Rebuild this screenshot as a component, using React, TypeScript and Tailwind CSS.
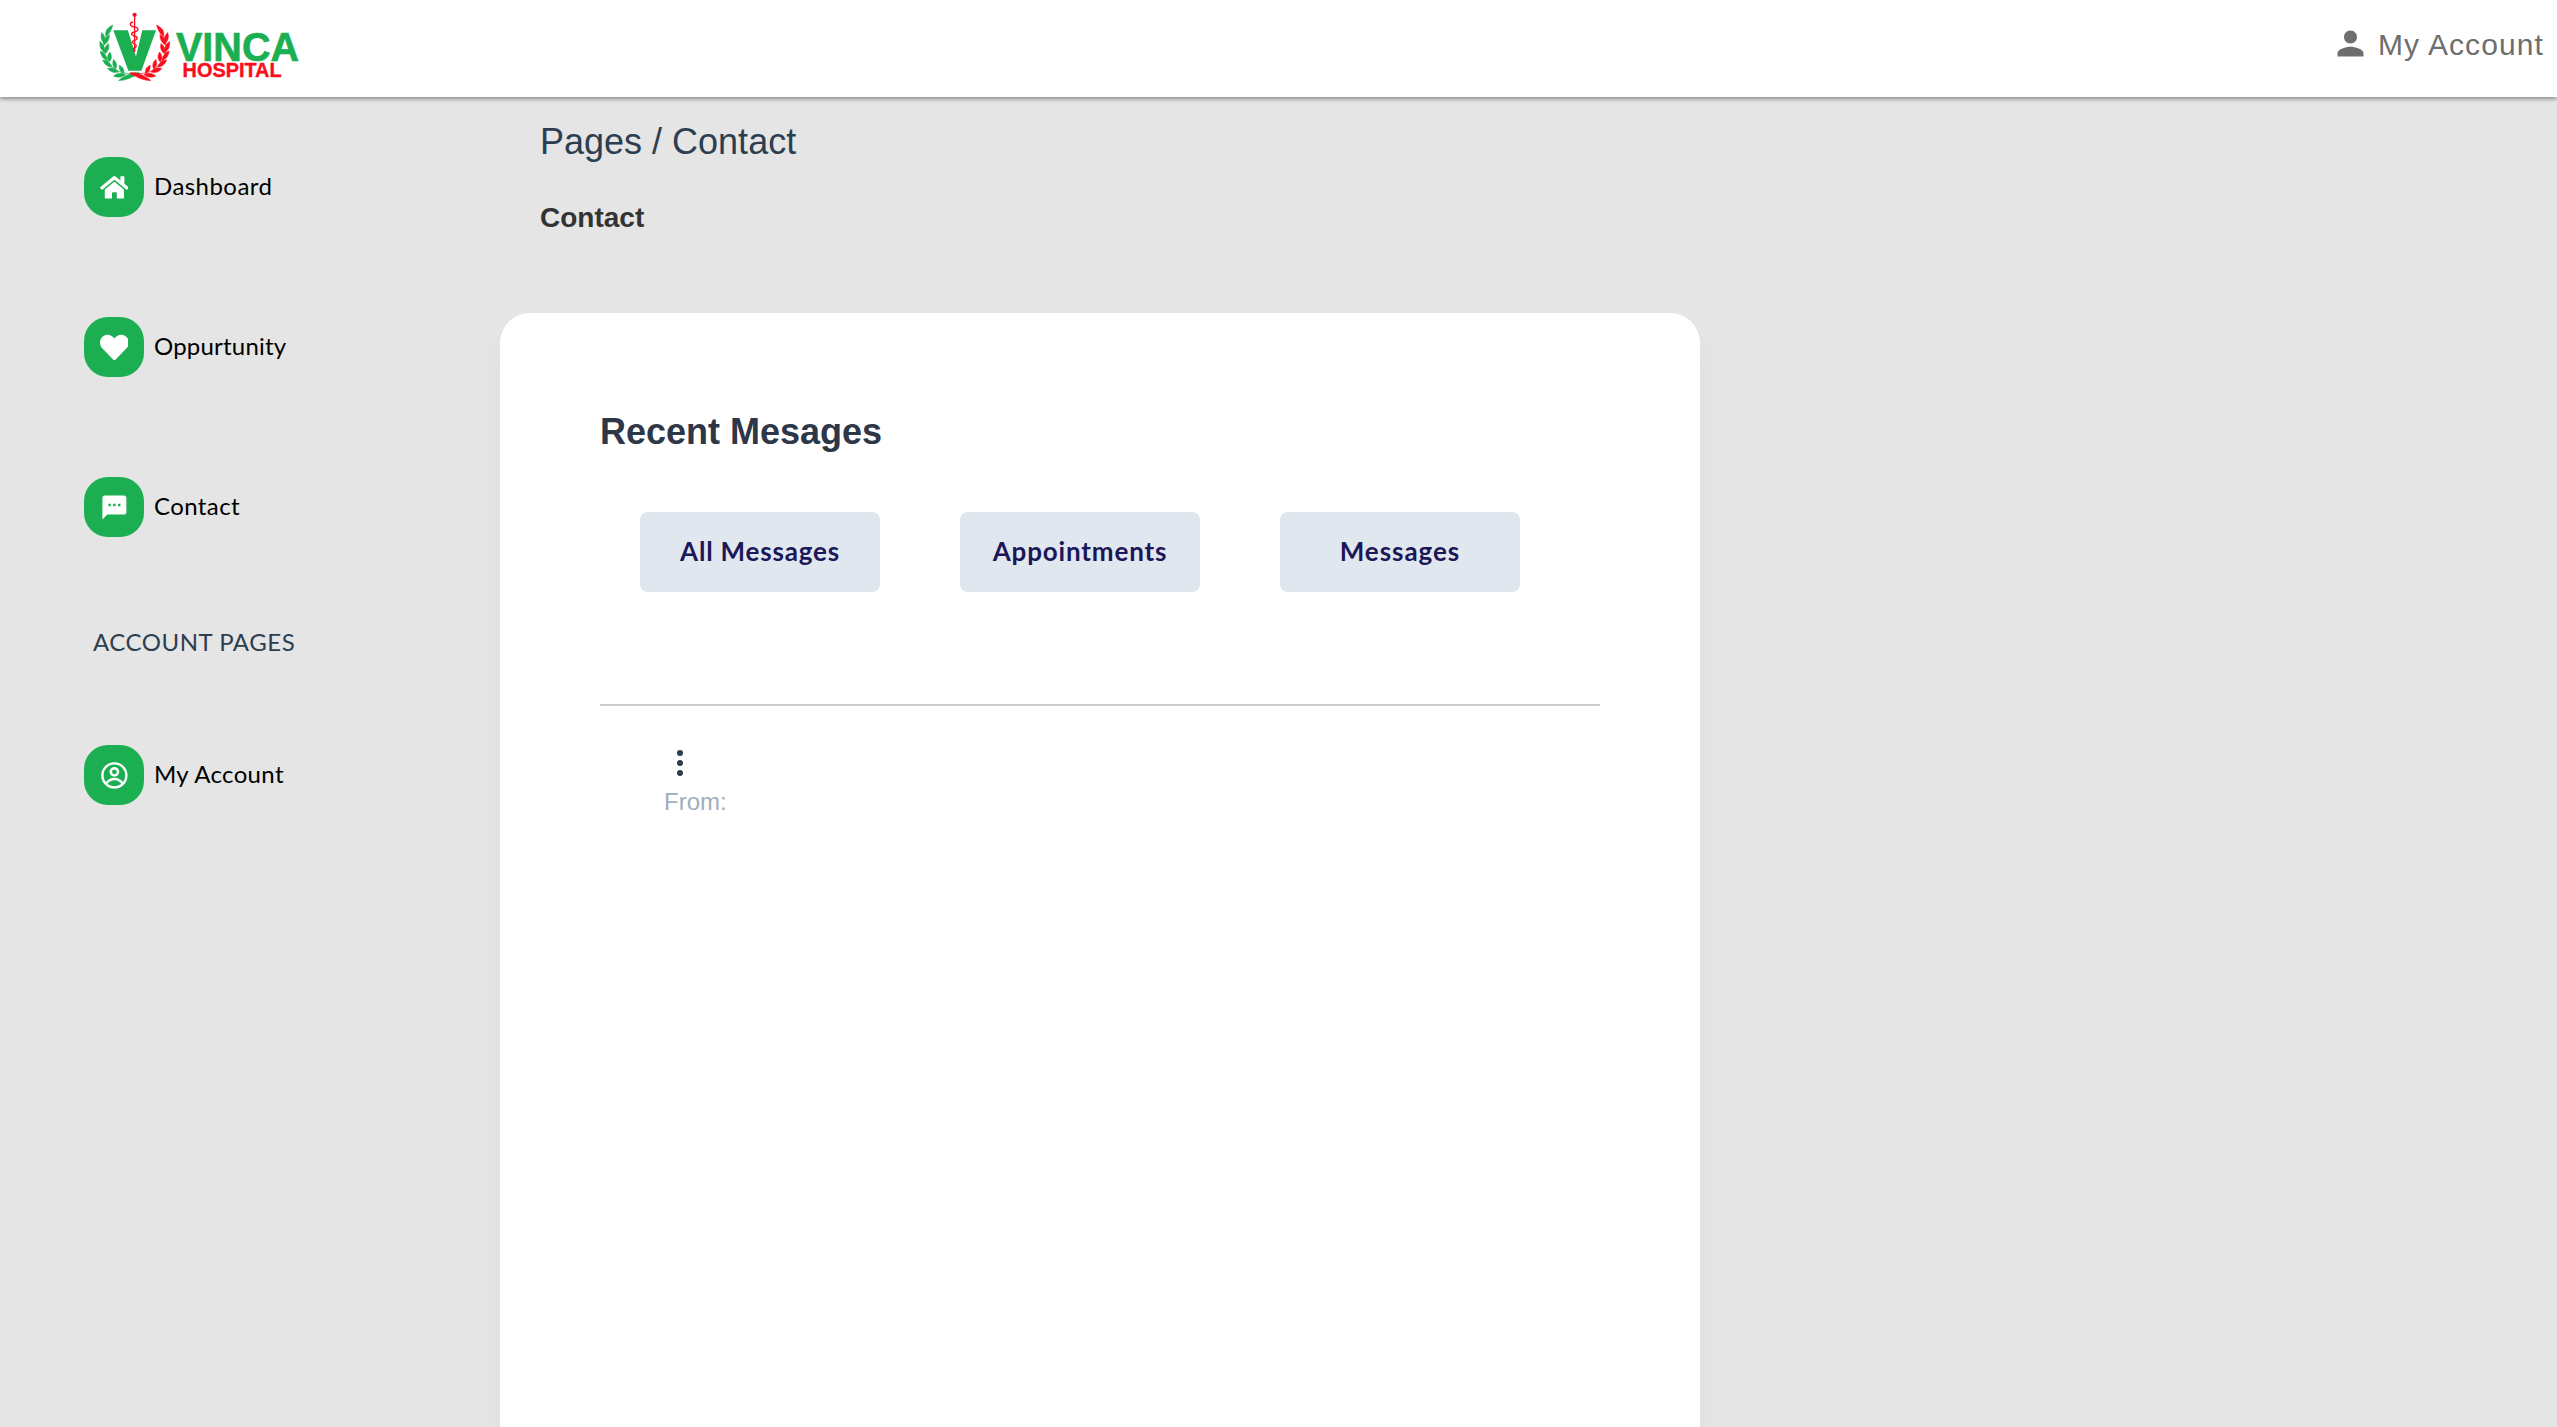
import React from "react";
import { FaHome, FaHeart } from "react-icons/fa";
import { MdSms, MdPerson } from "react-icons/md";
import { CgProfile } from "react-icons/cg";

function Laurel({ color }: { color: string }) {
  return (
    <g fill={color} stroke={color} strokeWidth="0.5">
      <path d="M111.5 27 C101 38 100 55 111 66 C118 73 127 74.5 136 73" fill="none" strokeWidth="0.7" />
      <path d="M139 72.5 C131 73 124 75.5 118.5 80.5 C126 81 133 76.5 139 74Z" />
      <path d="M112.8 25 C106.5 28 104.5 32 106.3 36.5 C110 33 111.6 29.5 112.8 25Z" />
      <path d="M101.7 32.5 C100.4 37 101 40.5 104.4 43.5 C105.6 39 104.8 35.5 101.7 32.5Z" />
      <path d="M109.5 34.5 C105 37.5 103 40.5 104.2 45 C107.8 42.5 109.6 39 109.5 34.5Z" />
      <path d="M99.8 41.5 C99.5 46.5 100.7 50 104.6 52.3 C105 47.5 103.6 44 99.8 41.5Z" />
      <path d="M108.4 43.5 C104.6 46.5 103.6 50 105.2 53.8 C108.5 51 109.6 47.5 108.4 43.5Z" />
      <path d="M100.2 51 C101 56 103 59 107.4 60.5 C107 56 104.5 52.5 100.2 51Z" />
      <path d="M109.8 52 C107 55.5 106.8 59 109.2 62 C112 59 112 55.5 109.8 52Z" />
      <path d="M102.6 60 C104.5 64.5 107.2 66.8 112 67 C110.5 62.8 107 60 102.6 60Z" />
      <path d="M113.5 59.5 C112 63.5 112.7 66.8 115.6 69 C117.5 65.5 116.6 62 113.5 59.5Z" />
      <path d="M107.5 68.5 C110.5 72 114 73.3 118.5 72 C115.8 68.5 111.8 67 107.5 68.5Z" />
      <path d="M119.3 65.2 C118.8 69.5 120.3 72 123.8 73.2 C124.5 69.8 122.8 66.8 119.3 65.2Z" />
      <path d="M113.5 76 C118 78 121.5 77.5 125.5 74.6 C121.5 72.5 117.5 72.8 113.5 76Z" />
    </g>
  );
}

function Logo() {
  return (
    <svg className="block shrink-0" width="210" height="70" viewBox="96 12 210 70">
      <Laurel color="#1caf52" />
      <g transform="matrix(-1 0 0 1 269.4 0)">
        <Laurel color="#fb0d1c" />
      </g>
      <path d="M113.3 30.3H127.8L136 56.5L142.3 30.3H156L141.4 70.8H128.4Z" fill="#1caf52" stroke="#fff" strokeWidth="1.6" paintOrder="stroke" />
      <g fill="none" stroke="#fb0d1c">
        <path d="M134.6 15V52" strokeWidth="1.3" />
        <path
          d="M133 22C129 23 129.6 26.4 134 26.8C139.4 27.6 139 31 134.5 32C130.5 33 130.8 35.2 134.5 36C138.2 37 138 39.4 134.5 40.4C131.6 41.4 131.8 43.2 134.5 44C137 45 136.8 46.8 134.5 47.8C132.8 48.6 133.4 50 135 51.5"
          strokeWidth="1.3"
        />
      </g>
      <circle cx="134.6" cy="14.8" r="2.1" fill="#fb0d1c" />
      <text x="176" y="61" textLength="123" lengthAdjust="spacingAndGlyphs" fontSize="41.5" fontWeight="700" fill="#1caf52" stroke="#1caf52" strokeWidth="0.7" className="font-['Liberation_Sans',sans-serif]">
        VINCA
      </text>
      <text x="182.6" y="76.9" textLength="99" lengthAdjust="spacingAndGlyphs" fontSize="20.6" fontWeight="700" fill="#fb0d1c" stroke="#fb0d1c" strokeWidth="0.4" className="font-['Liberation_Sans',sans-serif]">
        HOSPITAL
      </text>
    </svg>
  );
}

function NavItem({ icon, label, spacing }: { icon: React.ReactNode; label: string; spacing: string }) {
  return (
    <a className="flex h-[60px] items-center text-black">
      <span className="flex size-[60px] items-center justify-center rounded-[24px] bg-[#1caf52] text-[28.8px] text-white">
        {icon}
      </span>
      <span className={`mb-0.5 ml-[10px] font-['Lato',sans-serif] text-2xl whitespace-nowrap ${spacing}`}>{label}</span>
    </a>
  );
}

function Tab({ label, spacing }: { label: string; spacing: string }) {
  return (
    <button className="flex h-20 w-60 items-center justify-center rounded-lg bg-[#e1e7ef] pb-0.5 font-['Lato',sans-serif] text-[26px] font-bold text-[#1b1759]">
      <span className={spacing}>{label}</span>
    </button>
  );
}

export default function App() {
  return (
    <div className="flex h-[1427px] w-full flex-col overflow-hidden bg-[#e5e5e5] font-['Liberation_Sans',sans-serif]">
      <header className="relative z-10 flex h-[97px] shrink-0 items-start justify-between bg-white pt-3 pr-[13px] pl-24 shadow-[0_2px_4px_0_rgba(0,0,0,0.4)]">
        <Logo />
        <div className="flex h-[62px] items-center text-[#6e6e6e]">
          <MdPerson className="mr-2 size-[39px]" />
          <span className="mt-0.5 text-[30px] tracking-[1.1px]">My Account</span>
        </div>
      </header>

      <div className="flex min-h-0 flex-1">
        <nav className="flex w-[500px] shrink-0 flex-col pt-[60px] pl-[84px]">
          <div className="flex flex-col gap-[100px]">
            <NavItem icon={<FaHome />} label="Dashboard" spacing="tracking-[0.45px]" />
            <NavItem icon={<FaHeart />} label="Oppurtunity" spacing="tracking-[0.2px]" />
            <NavItem icon={<MdSms />} label="Contact" spacing="tracking-[0.4px]" />
          </div>
          <div className="mt-[89px] mb-[87px] pl-[9px] font-['Lato',sans-serif] text-2xl leading-8 tracking-[0.52px] text-[#2c3e50]">
            ACCOUNT PAGES
          </div>
          <NavItem icon={<CgProfile />} label="My Account" spacing="tracking-[0.35px]" />
        </nav>

        <main className="flex w-[1200px] flex-col">
          <div className="h-[216px] shrink-0 pt-[25px] pl-10">
            <div className="text-4xl leading-10 text-[#2c3e50]">Pages / Contact</div>
            <h1 className="mt-10 text-[28px] leading-8 font-bold text-[#333]">Contact</h1>
          </div>

          <section className="flex-1 rounded-t-[30px] bg-white px-[100px] pt-[99px] shadow-[0_20px_27px_0_rgba(0,0,0,0.03)]">
            <h2 className="text-4xl leading-10 font-bold text-[#2d3748]">Recent Mesages</h2>
            <div className="mt-[60px] flex gap-20 pl-10">
              <Tab label="All Messages" spacing="tracking-[0.8px]" />
              <Tab label="Appointments" spacing="tracking-[0.85px]" />
              <Tab label="Messages" spacing="tracking-[0.95px]" />
            </div>
            <hr className="mt-28 border-t-2 border-[#c8ccd1]" />
            <div className="flex flex-col items-start pt-11 pl-16">
              <span className="flex flex-col gap-1 pl-[13px]">
                <i className="size-1.5 rounded-full bg-[#2c3e50]" />
                <i className="size-1.5 rounded-full bg-[#2c3e50]" />
                <i className="size-1.5 rounded-full bg-[#2c3e50]" />
              </span>
              <p className="mt-[10px] text-2xl leading-8 text-[#a0aec0]">From:</p>
            </div>
          </section>
        </main>
      </div>
    </div>
  );
}
